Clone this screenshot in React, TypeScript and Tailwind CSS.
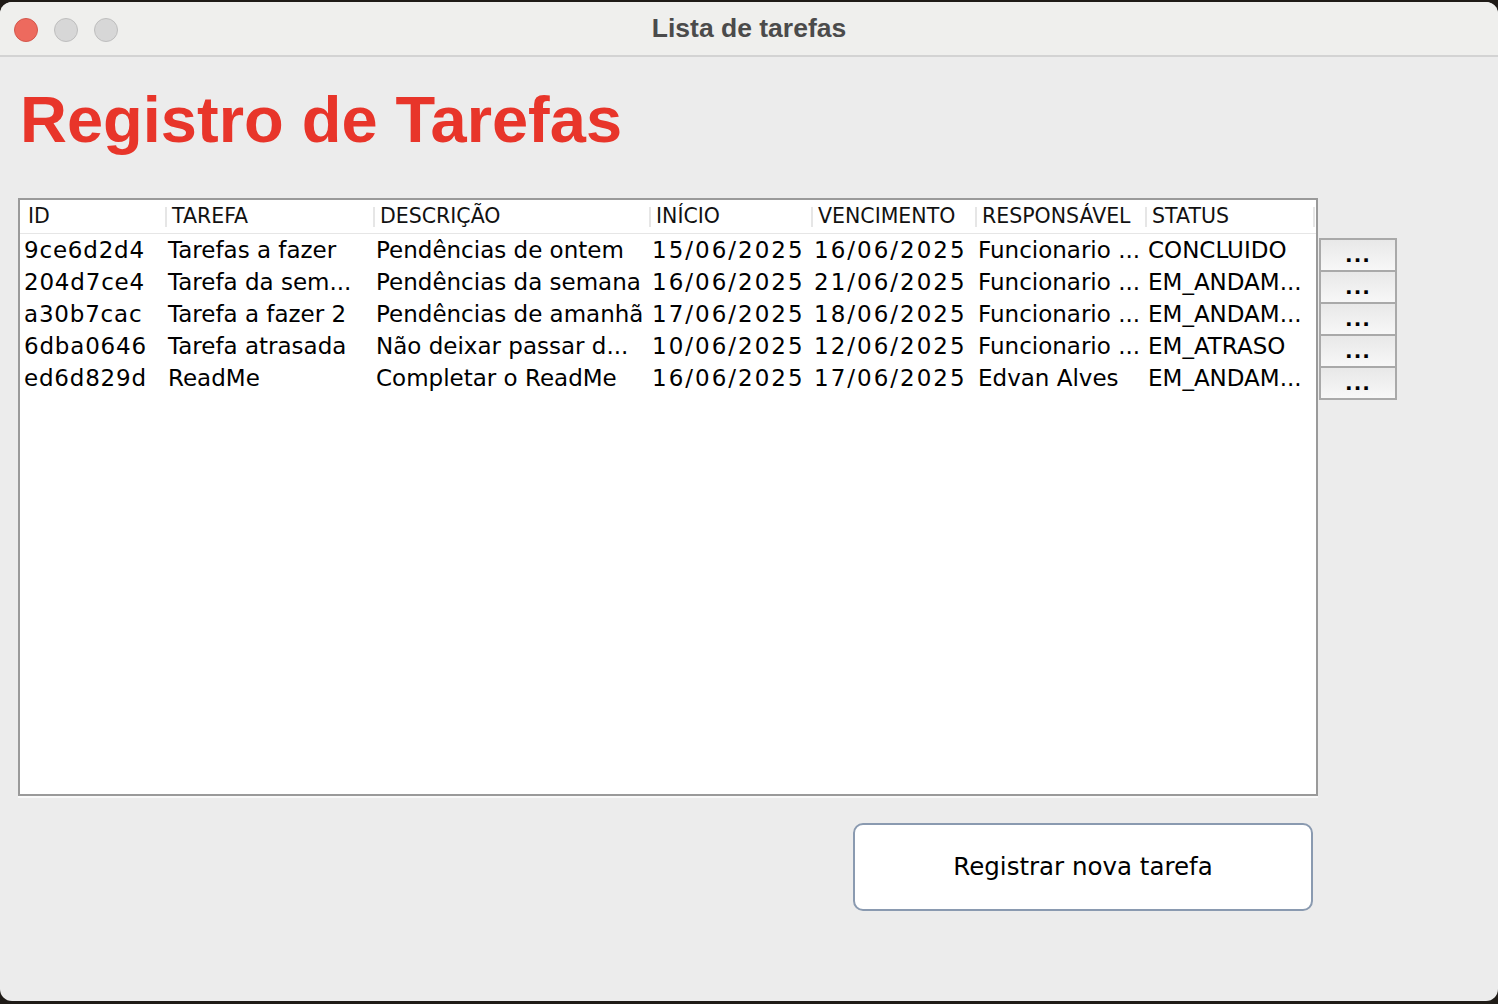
const cols = "grid grid-cols-[145px_208px_276px_162px_164px_170px_168px_3px]";

const headers = ["ID", "TAREFA", "DESCRIÇÃO", "INÍCIO", "VENCIMENTO", "RESPONSÁVEL", "STATUS"];

const rows = [
  ["9ce6d2d4", "Tarefas a fazer", "Pendências de ontem", "15/06/2025", "16/06/2025", "Funcionario ...", "CONCLUIDO"],
  ["204d7ce4", "Tarefa da sem...", "Pendências da semana", "16/06/2025", "21/06/2025", "Funcionario ...", "EM_ANDAM..."],
  ["a30b7cac", "Tarefa a fazer 2", "Pendências de amanhã", "17/06/2025", "18/06/2025", "Funcionario ...", "EM_ANDAM..."],
  ["6dba0646", "Tarefa atrasada", "Não deixar passar d...", "10/06/2025", "12/06/2025", "Funcionario ...", "EM_ATRASO"],
  ["ed6d829d", "ReadMe", "Completar o ReadMe", "16/06/2025", "17/06/2025", "Edvan Alves", "EM_ANDAM..."],
];

export default function App() {
  return (
    <div className="w-[1498px] h-[1004px] bg-[#1f1b17] overflow-hidden font-['DejaVu_Sans',sans-serif]">
      <div className="mt-[2px] h-[999px] rounded-[12px] bg-[#ececec] overflow-hidden flex flex-col">
        {/* TITLE BAR */}
        <div className="h-[55px] bg-[#efefed] border-b-2 border-[#d3d3d3] grid grid-cols-[1fr_auto_1fr] items-center">
          <div className="flex items-center gap-4 pl-[14px] pt-[2px]">
            <span className="w-[24px] h-[24px] rounded-full bg-[#ed6a5e] border border-[#d4574c]" />
            <span className="w-[24px] h-[24px] rounded-full bg-[#d7d7d7] border border-[#bebebe]" />
            <span className="w-[24px] h-[24px] rounded-full bg-[#d7d7d7] border border-[#bebebe]" />
          </div>
          <div className="font-['Liberation_Sans',sans-serif] font-bold text-[26.5px] text-[#4b4b4b] pt-[1px]">
            Lista de tarefas
          </div>
          <div />
        </div>

        {/* BODY */}
        <div className="flex-1 pl-[18px] pt-[30px]">
          <h1 className="ml-[2px] font-['Liberation_Sans',sans-serif] font-bold text-[65px] leading-none text-[#e8352a]">
            Registro de Tarefas
          </h1>

          <div className="flex mt-[46px]">
            {/* TABLE */}
            <div className="w-[1300px] h-[598px] border-2 border-[#9a9a9a] bg-white shadow-[0_2px_0_#f9f9f9]">
              <div className={`${cols} h-[34px] border-b border-[#e6e6e6] text-[20.5px] text-[#111]`}>
                {headers.map((h, i) => (
                  <div key={h} className="flex items-center whitespace-nowrap">
                    {i > 0 && <span className="w-[2px] h-[20px] bg-[#e6e6e6]" />}
                    <span className={i === 0 ? "ml-[8px]" : "ml-[5px]"}>{h}</span>
                  </div>
                ))}
                <div className="flex items-center">
                  <span className="w-[2px] h-[20px] bg-[#e6e6e6]" />
                </div>
              </div>
              {rows.map((r) => (
                <div key={r[0]} className={`${cols} h-[32px] text-[23px] leading-[32px] text-black`}>
                  {r.map((c, i) => (
                    <div
                      key={i}
                      className={`whitespace-nowrap overflow-hidden ${i === 0 ? "pl-[4px] tracking-[0.8px]" : "pl-[3px]"} ${
                        i === 3 || i === 4 ? "tracking-[2px]" : ""
                      }`}
                    >
                      {c}
                    </div>
                  ))}
                  <div />
                </div>
              ))}
            </div>

            {/* ROW ACTION BUTTONS */}
            <div className="ml-[1px] mt-[40px] w-[78px] h-fit border-2 border-[#a9a9a9] flex flex-col">
              {rows.map((r, i) => (
                <button
                  key={r[0]}
                  className={`bg-gradient-to-b from-[#e8e8e8] to-[#f7f7f7] text-center font-bold text-[20px] leading-[30px] tracking-[1px] text-black ${
                    i > 0 ? "h-[32px] border-t-2 border-[#a9a9a9]" : "h-[30px]"
                  }`}
                >
                  ...
                </button>
              ))}
            </div>
          </div>

          <button className="ml-[835px] mt-[27px] w-[460px] h-[88px] rounded-[10px] border-2 border-[#8a9ab0] bg-white text-[24.5px] text-black">
            Registrar nova tarefa
          </button>
        </div>
      </div>
    </div>
  );
}
